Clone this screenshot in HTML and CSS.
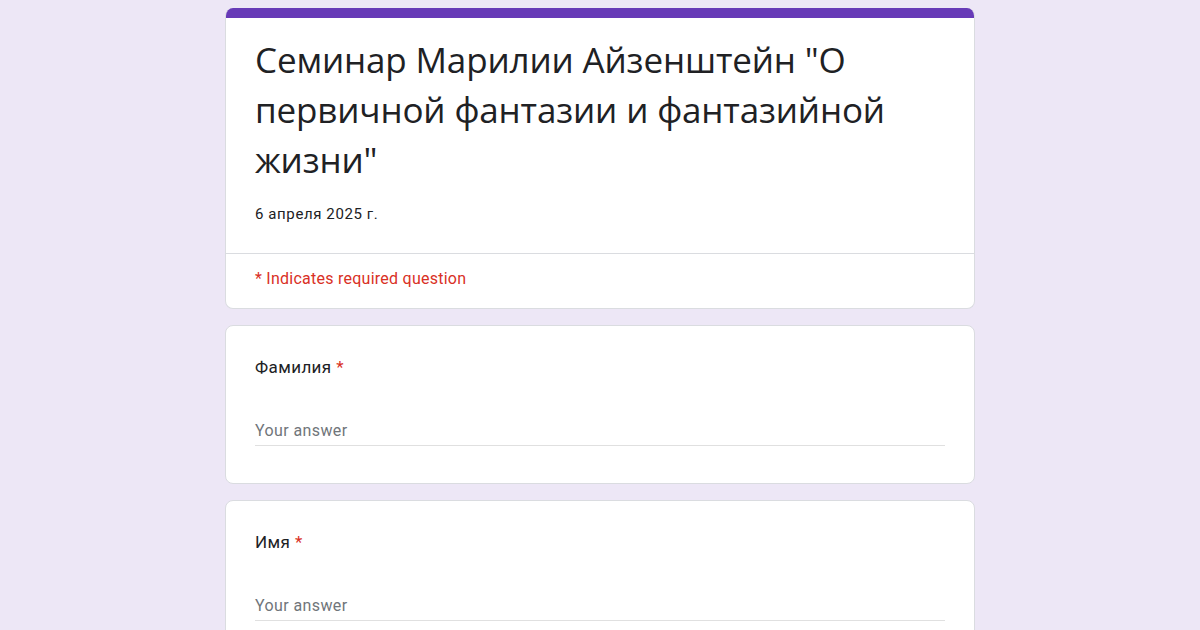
FILE: index.html
```html
<!DOCTYPE html>
<html lang="ru">
<head>
<meta charset="utf-8">
<link rel="stylesheet" href="styles.css">
</head>
<body>
<main class="form">
  <section class="card card-head">
    <div class="accent"></div>
    <div class="head-body">
      <h1 class="title">Семинар Марилии Айзенштейн "О первичной фантазии и фантазийной жизни"</h1>
      <div class="date">6 апреля 2025 г.</div>
    </div>
    <div class="required-note">* Indicates required question</div>
  </section>
  <section class="card question">
    <div class="label">Фамилия <span class="star">*</span></div>
    <div class="answer">Your answer</div>
  </section>
  <section class="card question">
    <div class="label">Имя <span class="star">*</span></div>
    <div class="answer">Your answer</div>
  </section>
</main>
</body>
</html>
```
FILE: styles.css
```css
html, body {
  margin: 0;
  padding: 0;
  background: #ede7f6;
}
body {
  padding-top: 8px;
  font-family: Roboto, "Liberation Sans", sans-serif;
  color: #202124;
}
.form {
  width: 750px;
  margin: 0 auto;
  display: flex;
  flex-direction: column;
  gap: 16px;
}
.card {
  background: #fff;
  border: 1px solid #dadce0;
  border-radius: 8px;
  box-sizing: border-box;
}
.card-head {
  border-top: none;
  overflow: hidden;
}
.accent {
  height: 10px;
  background: #673ab7;
}
.head-body {
  padding: 17px 29px 29px;
  border-bottom: 1px solid #dadce0;
}
.title {
  margin: 0;
  font-family: "Open Sans", "Noto Sans", sans-serif;
  font-weight: 400;
  font-size: 35px;
  letter-spacing: -0.15px;
  line-height: 50px;
  color: #202124;
}
.date {
  margin-top: 19px;
  font-size: 15px;
  line-height: 20px;
  letter-spacing: 0.6px;
  color: #202124;
}
.required-note {
  padding: 15px 29px 19px;
  font-size: 16px;
  line-height: 20px;
  color: #d93025;
  letter-spacing: 0.25px;
}
.question {
  padding: 27px 29px 37px;
}
.label {
  font-size: 17px;
  line-height: 28px;
  letter-spacing: 0.4px;
  color: #202124;
}
.star {
  color: #d93025;
}
.answer {
  margin-top: 35px;
  height: 29px;
  line-height: 29px;
  font-size: 16px;
  color: #70757a;
  border-bottom: 1px solid #e0e0e0;
  letter-spacing: 0.4px;
}
```
